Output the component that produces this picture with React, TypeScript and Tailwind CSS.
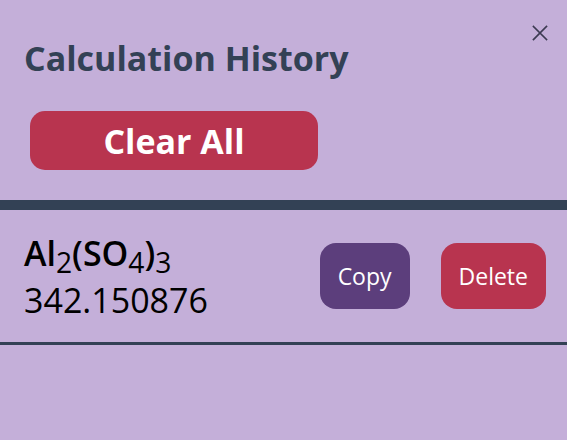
import React from 'react';

interface HistoryItem {
  id: number;
  mass: string;
}

const items: HistoryItem[] = [{ id: 1, mass: '342.150876' }];

function CloseIcon() {
  return (
    <svg width="16" height="16" viewBox="0 0 16 16" fill="none">
      <path d="M1.5 1.5 L14.5 14.5 M14.5 1.5 L1.5 14.5" stroke="#3c3a52" strokeWidth="1.7" strokeLinecap="square" />
    </svg>
  );
}

function Formula() {
  return (
    <span className="text-[34px] font-semibold leading-[54px] text-black">
      Al<sub className="text-[83%] font-normal">2</sub>(SO<sub className="text-[83%] font-normal">4</sub>)
      <sub className="text-[83%] font-normal">3</sub>
    </span>
  );
}

export default function App() {
  return (
    <div className="relative w-full h-[440px] bg-[#c4afd9] font-['Open_Sans','Noto_Sans',sans-serif]">
      <button className="absolute top-[25px] right-[19px] p-0 text-[#3c3a52]" aria-label="Close">
        <CloseIcon />
      </button>

      <div className="px-[24px] pt-[34px]">
        <h2 className="text-[34px] font-bold leading-[48px] text-[#334155]">Calculation History</h2>
        <button className="mt-[29px] ml-[6px] w-[288px] h-[59px] rounded-[15px] bg-[#b8344f] text-white text-[34px] font-bold leading-none">
          Clear All
        </button>
      </div>

      <div className="mt-[30px] border-t-[10px] border-[#334155]">
        {items.map((item) => (
          <div
            key={item.id}
            className="flex items-center justify-between h-[135px] pl-[24px] pr-[21px] border-b-[3px] border-[#334155]"
          >
            <div className="flex flex-col pb-[6px]">
              <Formula />
              <span className="text-[34px] leading-[40px] text-black">{item.mass}</span>
            </div>
            <div className="flex items-center gap-[31px]">
              <button className="h-[66px] px-[18px] rounded-[16px] bg-[#5c3e7c] text-white text-[23px]">Copy</button>
              <button className="h-[66px] px-[18px] rounded-[16px] bg-[#b8344f] text-white text-[23px]">Delete</button>
            </div>
          </div>
        ))}
      </div>
    </div>
  );
}
